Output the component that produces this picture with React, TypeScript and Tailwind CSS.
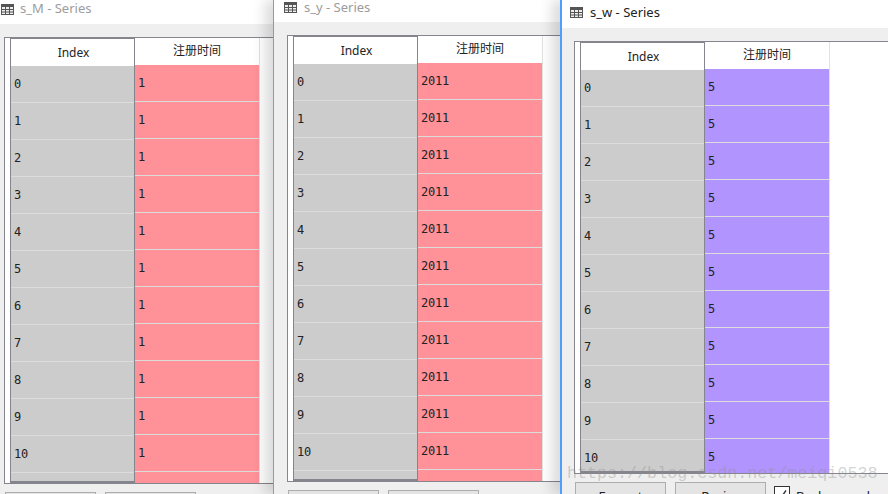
const sans = "font-['Noto_Sans_CJK_SC','Noto_Sans',sans-serif]";
const latin = "font-['Noto_Sans',sans-serif]";
const mono = "font-['DejaVu_Sans_Mono',monospace]";

function GridIcon() {
  return (
    <svg width="13" height="11" viewBox="0 0 13 11" className="shrink-0">
      <rect x="0.5" y="0.5" width="12" height="10" fill="#eeeeee" stroke="#555" />
      <rect x="0.5" y="0.5" width="12" height="2.5" fill="#555" />
      <path d="M4.5 1V10.5M8.5 1V10.5M1 5.5H12.5M1 8H12.5" stroke="#555" strokeWidth="1" fill="none" />
    </svg>
  );
}

function Table({ value, cell }: { value: string; cell: string }) {
  const rows = Array.from({ length: 13 }, (_, i) => i);
  return (
    <div className="flex h-full">
      <div className="w-[125px] shrink-0 h-full flex flex-col border-l border-r border-t border-b-2 border-[#85858d] overflow-hidden bg-[#cccccc]">
        <div className={`h-[27px] shrink-0 bg-white flex items-center justify-center pl-[2px] text-[12px] text-[#222] ${latin}`}>Index</div>
        {rows.map((i) => (
          <div key={i} className={`h-[37px] shrink-0 flex items-center pl-[3px] border-b border-[#dcdcdc] text-[12px] tracking-[-0.2px] text-[#222] ${mono}`}>
            {i}
          </div>
        ))}
      </div>
      <div className="w-[125px] shrink-0 h-full flex flex-col overflow-hidden border-r border-[#e2e2e2]">
        <div className={`h-[27px] shrink-0 bg-white flex items-center justify-center pb-[3px] text-[12px] text-[#222] ${sans}`}>注册时间</div>
        {rows.map((i) => (
          <div key={i} className={`h-[37px] shrink-0 flex items-center pl-[3px] border-b border-[#dcdcdc] text-[12px] tracking-[-0.2px] text-[#222] ${cell} ${mono}`}>
            {value}
          </div>
        ))}
      </div>
    </div>
  );
}

function Actions({ withCheck }: { withCheck?: boolean }) {
  return (
    <div className={`flex items-start gap-[9px] mt-2 ml-px text-[13px] text-[#222] ${latin}`}>
      <div className="w-[91px] h-[30px] shrink-0 border border-[#adadad] bg-[#e4e4e4] flex items-center justify-center">Format</div>
      <div className="w-[91px] h-[30px] shrink-0 border border-[#adadad] bg-[#e4e4e4] flex items-center justify-center">Resize</div>
      {withCheck && (
        <div className="flex items-start gap-[6px] -ml-px mt-1 whitespace-nowrap">
          <div className="w-4 h-4 border border-[#333] bg-white flex items-center justify-center shrink-0">
            <svg width="12" height="12" viewBox="0 0 12 12"><path d="M2 6.5L5 9.5L10 2.5" stroke="#333" strokeWidth="1.4" fill="none" /></svg>
          </div>
          <span className="leading-[21px]">Background color</span>
        </div>
      )}
    </div>
  );
}

export default function App() {
  return (
    <div className="relative w-[888px] h-[494px] overflow-hidden bg-white">
      {/* s_M */}
      <div className="absolute left-0 top-0 w-[273px] h-[494px] overflow-hidden bg-[#efefef] flex flex-col">
        <div className={`h-6 shrink-0 bg-white flex items-center gap-[6px] pl-px pb-[6px] text-[13px] text-[#9c9c9c] ${latin}`}>
          <GridIcon />
          <span>s_M - Series</span>
        </div>
        <div className="pl-1 pt-[13px]">
          <div className="w-[300px] h-[447px] border border-[#85858d] bg-white pl-[5px]">
            <Table value="1" cell="bg-[#ff9198]" />
          </div>
          <Actions />
        </div>
      </div>

      {/* s_y */}
      <div className="absolute left-[273px] top-0 w-[287px] h-[494px] overflow-hidden bg-[#efefef] flex flex-col border-l border-[#999999] shadow-[-8px_0_12px_rgba(0,0,0,0.14)]">
        <div className={`h-[22px] shrink-0 bg-white flex items-center gap-[7px] pl-[10px] pb-[7px] text-[13px] text-[#9c9c9c] ${latin}`}>
          <GridIcon />
          <span>s_y - Series</span>
        </div>
        <div className="pl-[13px] pt-[13px]">
          <div className="w-[300px] h-[447px] border border-[#85858d] bg-white pl-[5px]">
            <Table value="2011" cell="bg-[#ff9198]" />
          </div>
          <Actions />
        </div>
      </div>

      {/* s_w */}
      <div className="absolute left-[560px] top-0 w-[328px] h-[494px] overflow-hidden bg-[#efefef] flex flex-col border-l-2 border-[#4d9ffb] shadow-[-8px_0_12px_rgba(0,0,0,0.14)]">
        <div className={`h-7 shrink-0 bg-white flex items-center gap-[7px] pl-[8px] pb-[3px] text-[13px] text-[#222] ${latin}`}>
          <GridIcon />
          <span>s_w - Series</span>
        </div>
        <div className="pl-3 pt-[13px]">
          <div className="w-[340px] h-[433px] border border-[#85858d] bg-white pl-[5px]">
            <Table value="5" cell="bg-[#b294ff]" />
          </div>
          <Actions withCheck />
        </div>
      </div>

      <div className="absolute left-[567px] top-[464px] font-['Liberation_Mono',monospace] text-[16.7px] leading-5 text-[#8f8f8f]/40 whitespace-nowrap pointer-events-none">
        https://blog.csdn.net/meiqi0538
      </div>
    </div>
  );
}
